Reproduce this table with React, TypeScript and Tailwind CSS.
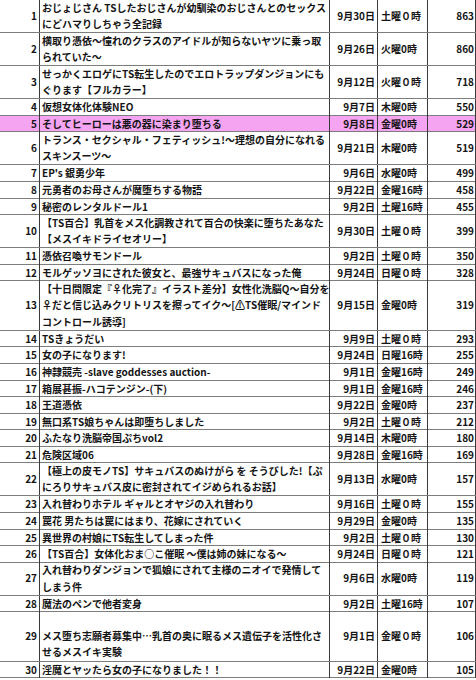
import React from "react";

interface RankRow {
  rank: number;
  title: string[];
  date: string;
  day: string;
  count: number;
  tall?: boolean; // extra empty line above the title (row 29)
  pink?: boolean;
}

const rows: RankRow[] = [
  { rank: 1, title: ["おじょじさん TSしたおじさんが幼馴染のおじさんとのセックス", "にどハマりしちゃう全記録"], date: "9月30日", day: "土曜０時", count: 863 },
  { rank: 2, title: ["横取り憑依～憧れのクラスのアイドルが知らないヤツに乗っ取", "られていた～"], date: "9月26日", day: "火曜0時", count: 860 },
  { rank: 3, title: ["せっかくエロゲにTS転生したのでエロトラップダンジョンにも", "ぐります【フルカラー】"], date: "9月12日", day: "火曜０時", count: 718 },
  { rank: 4, title: ["仮想女体化体験NEO"], date: "9月7日", day: "木曜0時", count: 550 },
  { rank: 5, title: ["そしてヒーローは悪の器に染まり堕ちる"], date: "9月8日", day: "金曜0時", count: 529, pink: true },
  { rank: 6, title: ["トランス・セクシャル・フェティッシュ!～理想の自分になれる", "スキンスーツ～"], date: "9月21日", day: "木曜0時", count: 519 },
  { rank: 7, title: ["EP's 銀勇少年"], date: "9月6日", day: "水曜0時", count: 499 },
  { rank: 8, title: ["元勇者のお母さんが魔堕ちする物語"], date: "9月22日", day: "金曜16時", count: 458 },
  { rank: 9, title: ["秘密のレンタルドール1"], date: "9月2日", day: "土曜16時", count: 455 },
  { rank: 10, title: ["【TS百合】乳首をメス化調教されて百合の快楽に堕ちたあなた", "【メスイキドライセオリー】"], date: "9月30日", day: "土曜０時", count: 399 },
  { rank: 11, title: ["憑依召喚サモンドール"], date: "9月2日", day: "土曜０時", count: 350 },
  { rank: 12, title: ["モルゲッソヨにされた彼女と、最強サキュバスになった俺"], date: "9月24日", day: "日曜０時", count: 328 },
  { rank: 13, title: ["【十日間限定『♀化完了』イラスト差分】女性化洗脳Q～自分を", "♀だと信じ込みクリトリスを擦ってイク～[⚠TS催眠/マインド", "コントロール誘導]"], date: "9月15日", day: "金曜0時", count: 319 },
  { rank: 14, title: ["TSきょうだい"], date: "9月9日", day: "土曜０時", count: 293 },
  { rank: 15, title: ["女の子になります!"], date: "9月24日", day: "日曜16時", count: 255 },
  { rank: 16, title: ["神隷競売 -slave goddesses auction-"], date: "9月1日", day: "金曜16時", count: 249 },
  { rank: 17, title: ["箱展甚振-ハコテンジン-(下)"], date: "9月1日", day: "金曜16時", count: 246 },
  { rank: 18, title: ["王道憑依"], date: "9月22日", day: "金曜0時", count: 237 },
  { rank: 19, title: ["無口系TS娘ちゃんは即堕ちしました"], date: "9月2日", day: "土曜０時", count: 212 },
  { rank: 20, title: ["ふたなり洗脳帝国ぷちvol2"], date: "9月14日", day: "木曜0時", count: 180 },
  { rank: 21, title: ["危険区域06"], date: "9月28日", day: "金曜16時", count: 169 },
  { rank: 22, title: ["【極上の皮モノTS】サキュバスのぬけがら を そうびした!【ぷ", "にろりサキュバス皮に密封されてイジめられるお話】"], date: "9月13日", day: "水曜0時", count: 157 },
  { rank: 23, title: ["入れ替わりホテル ギャルとオヤジの入れ替わり"], date: "9月16日", day: "土曜０時", count: 155 },
  { rank: 24, title: ["罠花 男たちは罠にはまり、花嫁にされていく"], date: "9月29日", day: "金曜0時", count: 135 },
  { rank: 25, title: ["異世界の村娘にTS転生してしまった件"], date: "9月2日", day: "土曜０時", count: 130 },
  { rank: 26, title: ["【TS百合】女体化おま○こ催眠 ～僕は姉の妹になる～"], date: "9月24日", day: "日曜０時", count: 121 },
  { rank: 27, title: ["入れ替わりダンジョンで狐娘にされて主様のニオイで発情して", "しまう件"], date: "9月6日", day: "水曜0時", count: 119 },
  { rank: 28, title: ["魔法のペンで他者変身"], date: "9月2日", day: "土曜16時", count: 107 },
  { rank: 29, title: ["メス堕ち志願者募集中…乳首の奥に眠るメス遺伝子を活性化さ", "せるメスイキ実験"], date: "9月1日", day: "金曜０時", count: 106, tall: true },
  { rank: 30, title: ["淫魔とヤッたら女の子になりました！！"], date: "9月22日", day: "金曜0時", count: 105 },
];

function rowHeight(row: RankRow) {
  const lines = row.tall ? 3 : row.title.length;
  if (lines === 3) return "h-[49.65px]";
  if (lines === 2) return "h-[33.1px]";
  return "h-[16.55px]";
}

function Row({ row }: { row: RankRow }) {
  return (
    <div
      className={`grid grid-cols-[40px_290px_48px_50px_48px] border-b border-[#7d7d7d] ${rowHeight(row)} ${
        row.pink ? "bg-[#f5a4f1]" : "bg-white"
      }`}
    >
      <div className="flex items-center justify-end border-r border-[#3a3a3a] pr-[2px]">{row.rank}</div>
      <div
        className={`flex flex-col border-r border-[#3a3a3a] pl-[2px] overflow-hidden ${
          row.tall ? "justify-end" : "justify-center"
        }`}
      >
        {row.title.map((line, i) => (
          <span key={i} className="whitespace-nowrap">
            {line}
          </span>
        ))}
      </div>
      <div className="flex items-center justify-end border-r border-[#3a3a3a] pr-[2px]">{row.date}</div>
      <div className="flex items-center border-r border-[#3a3a3a] pl-[3px] whitespace-nowrap">{row.day}</div>
      <div className="flex items-center justify-end border-r border-[#3a3a3a] pr-[1px]">{row.count}</div>
    </div>
  );
}

export default function App() {
  return (
    <div className="w-[476px] h-[680px] overflow-hidden bg-white">
      <div
        className="text-[10px] leading-[16.55px] font-bold text-[#141414]"
        style={{ fontFamily: '"Noto Sans CJK JP", "Noto Sans", sans-serif' }}
      >
        {rows.map((row) => (
          <Row key={row.rank} row={row} />
        ))}
      </div>
    </div>
  );
}
